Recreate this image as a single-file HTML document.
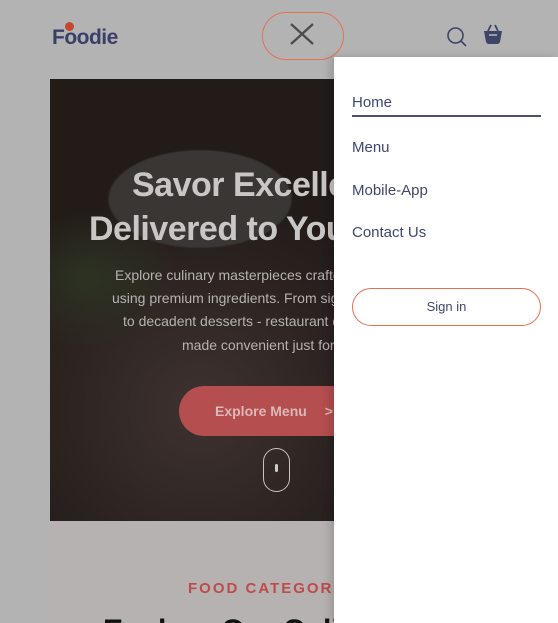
<!DOCTYPE html>
<html><head><meta charset="utf-8"><style>
*{margin:0;padding:0;box-sizing:border-box}
html,body{width:558px;height:623px;overflow:hidden}
body{background:#b3b3b3;font-family:"Liberation Sans",sans-serif;position:relative}
.abs{position:absolute}
.hero{left:50px;top:79px;width:290px;height:442px;overflow:hidden;
background:radial-gradient(ellipse 150px 80px at 150px 120px,#3a3633 60%,transparent 62%),
radial-gradient(ellipse 90px 70px at 40px 200px,#2c3322,transparent),
radial-gradient(ellipse 260px 260px at 150px 330px,#3e3230,#221b18 85%),
linear-gradient(#251406,#1d150f)}
.h1{color:#c9c7c5;font-weight:bold;font-size:34px;white-space:nowrap;letter-spacing:-0.5px}
.p{color:#b6b2b0;font-size:14px;white-space:nowrap}
.menu{left:334px;top:57px;width:224px;height:566px;background:#fff;box-shadow:-4px 0 8px rgba(0,0,0,.15)}
.mi{position:absolute;left:18px;color:#3f4770;font-size:15px}
</style></head><body>
<div class="abs" style="left:52px;top:26px;font-size:21px;font-weight:bold;color:#3a3f68;letter-spacing:-0.5px">Foodie</div>
<div class="abs" style="left:65px;top:22px;width:9px;height:9px;border-radius:50%;background:#c9452e"></div>
<div class="abs" style="left:262px;top:12px;width:82px;height:48px;border:1.5px solid #e8704f;border-radius:24px"></div>
<svg class="abs" style="left:288px;top:21px" width="28" height="26" viewBox="0 0 28 26"><path d="M3 3L25 23M25 3L3 23" stroke="#4a4a4a" stroke-width="2.2"/></svg>
<svg class="abs" style="left:446px;top:26px" width="22" height="22" viewBox="0 0 22 22"><circle cx="9.5" cy="9.5" r="7.5" fill="none" stroke="#3d4468" stroke-width="1.6"/><path d="M15 15L20 20" stroke="#3d4468" stroke-width="1.6"/></svg>
<svg class="abs" style="left:483px;top:23px" width="20" height="22" viewBox="0 0 20 22"><path d="M5 8L8 2M15 8L12 2" stroke="#3d4468" stroke-width="1.8" fill="none"/><path d="M1 8H19L17 19Q16 21 14 21H6Q4 21 3 19Z" fill="#3d4468"/><path d="M6 12H14" stroke="#b3b3b3" stroke-width="1.6"/></svg>
<div class="abs hero">
<div class="abs h1" style="left:82px;top:87px">Savor Excellence</div>
<div class="abs h1" style="left:39px;top:131px">Delivered to Your Door</div>
<div class="abs p" style="left:65px;top:188px">Explore culinary masterpieces crafted</div>
<div class="abs p" style="left:62px;top:211px">using premium ingredients. From signature</div>
<div class="abs p" style="left:73px;top:234px">to decadent desserts - restaurant quality</div>
<div class="abs p" style="left:132px;top:258px">made convenient just for you</div>
<div class="abs" style="left:129px;top:307px;width:200px;height:50px;border-radius:25px;background:#b54e4e;color:#d9b9b7;font-weight:bold;font-size:14px;padding:17px 0 0 36px">Explore Menu <span style="margin-left:14px">&gt;</span></div>
<div class="abs" style="left:213px;top:369px;width:27px;height:44px;border:1.5px solid #c7c3c1;border-radius:14px"></div>
<div class="abs" style="left:225px;top:385px;width:3px;height:8px;background:#ccc;border-radius:2px"></div>
</div>
<div class="abs" style="left:50px;top:521px;width:290px;height:102px;background:#b6b2b1"></div>
<div class="abs" style="left:188px;top:580px;color:#c0494a;font-weight:bold;font-size:15px;letter-spacing:2px;white-space:nowrap">FOOD CATEGORIES</div>
<div class="abs" style="left:103px;top:614px;color:#111;font-weight:bold;font-size:30px;white-space:nowrap">Explore Our Culinary</div>
<div class="abs menu">
<div class="mi" style="top:37px">Home</div>
<div class="abs" style="left:18px;top:58px;width:189px;height:1.5px;background:#4a5078"></div>
<div class="mi" style="top:82px">Menu</div>
<div class="mi" style="top:125px">Mobile-App</div>
<div class="mi" style="top:167px">Contact Us</div>
<div class="abs" style="left:18px;top:231px;width:189px;height:38px;border:1px solid #e8704f;border-radius:19px;color:#3f4770;font-size:13px;text-align:center;line-height:36px">Sign in</div>
</div>
</body></html>
